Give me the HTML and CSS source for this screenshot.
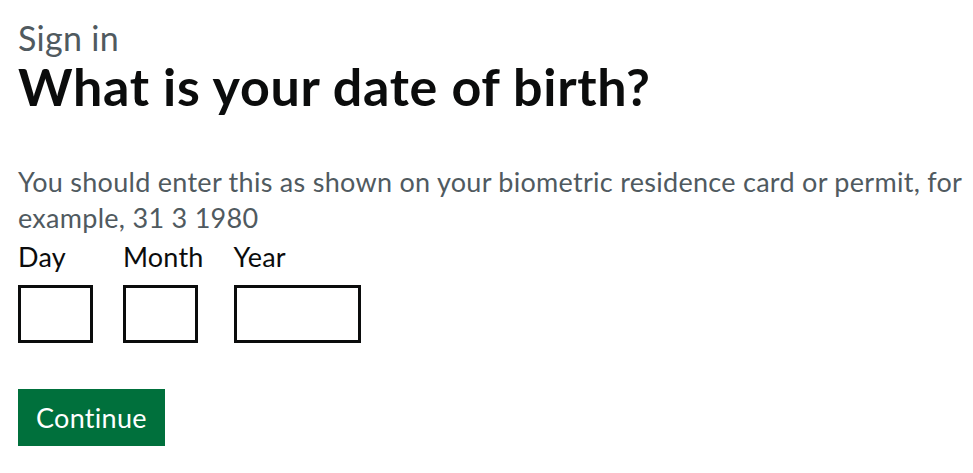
FILE: index.html
```html
<!DOCTYPE html>
<html lang="en">
<head>
<meta charset="utf-8">
<title>Sign in - What is your date of birth?</title>
<link rel="stylesheet" href="styles.css">
</head>
<body>
<main class="page">
  <form class="form">
    <fieldset class="fieldset">
      <legend class="legend">
        <span class="caption">Sign in</span>
        <h1 class="heading">What is your date of birth?</h1>
      </legend>
      <div class="hint">You should enter this as shown on your biometric residence card or permit, for example, 31 3 1980</div>
      <div class="date-input">
        <div class="date-item">
          <label class="label" for="dob-day">Day</label>
          <input class="input input-2" id="dob-day" type="text" inputmode="numeric">
        </div>
        <div class="date-item">
          <label class="label" for="dob-month">Month</label>
          <input class="input input-2" id="dob-month" type="text" inputmode="numeric">
        </div>
        <div class="date-item">
          <label class="label" for="dob-year">Year</label>
          <input class="input input-4" id="dob-year" type="text" inputmode="numeric">
        </div>
      </div>
    </fieldset>
    <button class="button" type="submit">Continue</button>
  </form>
</main>
</body>
</html>
```
FILE: styles.css
```css
* { box-sizing: border-box; }
html, body { margin: 0; padding: 0; background: #ffffff; }
body {
  font-family: "Lato", "Noto Sans", "Liberation Sans", sans-serif;
  color: #0b0c0c;
}
.page {
  padding: 18px 4px 0 18px;
}
.form { display: flex; flex-direction: column; align-items: flex-start; }
.fieldset { border: 0; margin: 0; padding: 0; min-width: 0; }
.legend { padding: 0; display: block; }
.caption {
  display: block;
  font-size: 34px;
  line-height: 40px;
  letter-spacing: 0.3px;
  color: #505a5f;
}
.heading {
  margin: 0;
  font-size: 52px;
  line-height: 56px;
  font-weight: 700;
  letter-spacing: 0.7px;
}
.hint {
  margin-top: 50px;
  font-size: 27px;
  line-height: 36px;
  letter-spacing: 0.28px;
  color: #505a5f;
}
.date-input {
  display: flex;
  gap: 30px;
  margin-top: 3px;
}
.date-item { display: flex; flex-direction: column; }
.label {
  font-size: 27px;
  line-height: 36px;
  letter-spacing: 0.2px;
  margin-bottom: 10px;
}
.input {
  height: 58px;
  border: 3px solid #0b0c0c;
  border-radius: 0;
  background: #ffffff;
  font: inherit;
  font-size: 27px;
  padding: 4px;
}
.input-2 { width: 75px; }
.input-4 { width: 127px; }
.button {
  margin-top: 46px;
  background: #00703c;
  color: #ffffff;
  border: 0;
  border-radius: 0;
  box-shadow: 0 3px 0 #002d18;
  font: inherit;
  font-size: 27px;
  line-height: 32px;
  letter-spacing: 0.3px;
  padding: 13px 18px 12px 18px;
  cursor: pointer;
}
```
